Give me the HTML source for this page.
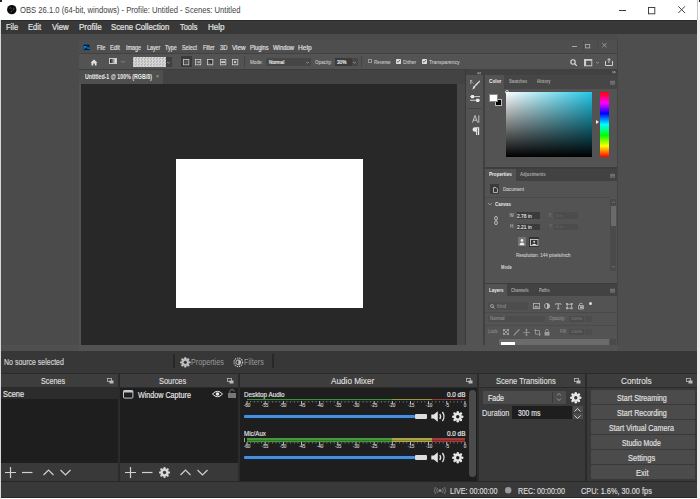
<!DOCTYPE html>
<html><head><meta charset="utf-8">
<style>
*{margin:0;padding:0;box-sizing:border-box}
html,body{width:700px;height:499px;overflow:hidden;background:#fff;font-family:"Liberation Sans",sans-serif;position:relative}
.a{position:absolute}
.t{position:absolute;white-space:nowrap}
svg{overflow:visible}
</style></head><body>
<div class="a" style="left:0px;top:0px;width:700px;height:499px;background:#ffffff;"></div>
<div class="a" style="left:0px;top:20px;width:1px;height:479px;background:#d8d8d8;"></div>
<div class="a" style="left:697px;top:20px;width:3px;height:479px;background:#e8e8e8;"></div>
<div class="a" style="left:0px;top:0px;width:1.5px;height:1.5px;background:#222;"></div>
<div class="a" style="left:698.5px;top:0px;width:1.5px;height:1.5px;background:#222;"></div>
<svg class="a" style="left:6.5px;top:5px;" width="10" height="10" viewBox="0 0 10 10"><circle cx="4.75" cy="4.65" r="4.7" fill="#0a0a0a"/><path d="M2.2 3.2 Q3.6 2.2 4.6 3.6 M6.8 2.8 Q7.4 4.6 5.9 5.4 M3.6 7.2 Q4.9 6.9 4.6 5.6" stroke="#6a6a6a" stroke-width="0.8" fill="none"/></svg>
<div class="t" style="left:19.916773338882933px;top:6.19px;font-size:8.4px;line-height:8.4px;color:#404040;transform:scaleX(0.9124444312311119);transform-origin:0 0;">OBS 26.1.0 (64-bit, windows) - Profile: Untitled - Scenes: Untitled</div>
<div class="a" style="left:619px;top:9.6px;width:7.2px;height:0.9px;background:#3a3a3a;"></div>
<svg class="a" style="left:648px;top:6.5px;" width="8" height="8" viewBox="0 0 8 8"><rect x="0.5" y="0.5" width="6.3" height="6.3" fill="none" stroke="#3a3a3a" stroke-width="0.95"/></svg>
<svg class="a" style="left:678px;top:6.3px;" width="8" height="8" viewBox="0 0 8 8"><path d="M0.3 0.3 L7 7 M7 0.3 L0.3 7" stroke="#3a3a3a" stroke-width="0.95"/></svg>
<div class="a" style="left:697px;top:0px;width:1px;height:20px;background:#c8c8c8;"></div>
<div class="a" style="left:1px;top:20px;width:696px;height:14px;background:#383838;"></div>
<div class="a" style="left:1px;top:20px;width:696px;height:1px;background:#2c2c2c;"></div>
<div class="t" style="left:5.625331224452068px;top:23.02px;font-size:8.6px;line-height:8.6px;color:#e6e6e6;-webkit-text-stroke:0.20px #e6e6e6;transform:scaleX(0.8713227338324011);transform-origin:0 0;">File</div>
<div class="t" style="left:28.220367004075698px;top:23.02px;font-size:8.6px;line-height:8.6px;color:#e6e6e6;-webkit-text-stroke:0.20px #e6e6e6;transform:scaleX(0.8828674323821);transform-origin:0 0;">Edit</div>
<div class="t" style="left:51.61154441443355px;top:23.02px;font-size:8.6px;line-height:8.6px;color:#e6e6e6;-webkit-text-stroke:0.20px #e6e6e6;transform:scaleX(0.9033850827126679);transform-origin:0 0;">View</div>
<div class="t" style="left:78.59919839679358px;top:23.02px;font-size:8.6px;line-height:8.6px;color:#e6e6e6;-webkit-text-stroke:0.20px #e6e6e6;transform:scaleX(0.9320967516428206);transform-origin:0 0;">Profile</div>
<div class="t" style="left:111.11156864563226px;top:23.02px;font-size:8.6px;line-height:8.6px;color:#e6e6e6;-webkit-text-stroke:0.20px #e6e6e6;transform:scaleX(0.9033287310877799);transform-origin:0 0;">Scene Collection</div>
<div class="t" style="left:179.82797691563346px;top:23.02px;font-size:8.6px;line-height:8.6px;color:#e6e6e6;-webkit-text-stroke:0.20px #e6e6e6;transform:scaleX(0.8651699636431112);transform-origin:0 0;">Tools</div>
<div class="t" style="left:207.69576057076574px;top:23.02px;font-size:8.6px;line-height:8.6px;color:#e6e6e6;-webkit-text-stroke:0.20px #e6e6e6;transform:scaleX(0.9400916958936402);transform-origin:0 0;">Help</div>
<div class="a" style="left:1px;top:34px;width:696px;height:317px;background:#4b4b4b;"></div>
<div class="a" style="left:618px;top:34px;width:79px;height:317px;background:#4e4e4e;"></div>
<div class="a" style="left:1px;top:344.5px;width:696px;height:6.5px;background:#4f4f4f;"></div>
<div class="a" style="left:79px;top:40px;width:539px;height:311px;background:#535353;"></div>
<div class="a" style="left:79px;top:40px;width:539px;height:13px;background:#4e4e4e;"></div>
<svg class="a" style="left:83.3px;top:44.3px;" width="7" height="7" viewBox="0 0 7 7"><rect x="0.25" y="0.25" width="6.6" height="6.3" rx="1" fill="#001e36" stroke="#2b6ea8" stroke-width="0.5"/><text x="1.1" y="4.9" font-family="Liberation Sans" font-weight="700" font-size="4.2" fill="#31a8ff">Ps</text></svg>
<div class="t" style="left:96.7403611116817px;top:45.10px;font-size:6.5px;line-height:6.5px;color:#e2e2e2;-webkit-text-stroke:0.15px #e2e2e2;transform:scaleX(0.7988888871332441);transform-origin:0 0;">File</div>
<div class="t" style="left:110.41527525305678px;top:45.10px;font-size:6.5px;line-height:6.5px;color:#e2e2e2;-webkit-text-stroke:0.15px #e2e2e2;transform:scaleX(0.8760761444406989);transform-origin:0 0;">Edit</div>
<div class="t" style="left:125.93041437170281px;top:45.10px;font-size:6.5px;line-height:6.5px;color:#e2e2e2;-webkit-text-stroke:0.15px #e2e2e2;transform:scaleX(0.8294942409144451);transform-origin:0 0;">Image</div>
<div class="t" style="left:146.53460329802056px;top:45.10px;font-size:6.5px;line-height:6.5px;color:#e2e2e2;-webkit-text-stroke:0.15px #e2e2e2;transform:scaleX(0.8166052368598766);transform-origin:0 0;">Layer</div>
<div class="t" style="left:165.3305080794941px;top:45.10px;font-size:6.5px;line-height:6.5px;color:#e2e2e2;-webkit-text-stroke:0.15px #e2e2e2;transform:scaleX(0.829205909248921);transform-origin:0 0;">Type</div>
<div class="t" style="left:182.33227358293243px;top:45.10px;font-size:6.5px;line-height:6.5px;color:#e2e2e2;-webkit-text-stroke:0.15px #e2e2e2;transform:scaleX(0.8237735909771052);transform-origin:0 0;">Select</div>
<div class="t" style="left:202.74204895207387px;top:45.10px;font-size:6.5px;line-height:6.5px;color:#e2e2e2;-webkit-text-stroke:0.15px #e2e2e2;transform:scaleX(0.7936955320804068);transform-origin:0 0;">Filter</div>
<div class="t" style="left:219.7054685548236px;top:45.10px;font-size:6.5px;line-height:6.5px;color:#e2e2e2;-webkit-text-stroke:0.15px #e2e2e2;transform:scaleX(0.906250600542739);transform-origin:0 0;">3D</div>
<div class="t" style="left:231.68437983672726px;top:45.10px;font-size:6.5px;line-height:6.5px;color:#e2e2e2;-webkit-text-stroke:0.15px #e2e2e2;transform:scaleX(0.9711389639161178);transform-origin:0 0;">View</div>
<div class="t" style="left:249.7178517546094px;top:45.10px;font-size:6.5px;line-height:6.5px;color:#e2e2e2;-webkit-text-stroke:0.15px #e2e2e2;transform:scaleX(0.8681484473556892);transform-origin:0 0;">Plugins</div>
<div class="t" style="left:273.20432603463354px;top:45.10px;font-size:6.5px;line-height:6.5px;color:#e2e2e2;-webkit-text-stroke:0.15px #e2e2e2;transform:scaleX(0.9097660472814846);transform-origin:0 0;">Window</div>
<div class="t" style="left:297.6694897748399px;top:45.10px;font-size:6.5px;line-height:6.5px;color:#e2e2e2;-webkit-text-stroke:0.15px #e2e2e2;transform:scaleX(1.016954538954126);transform-origin:0 0;">Help</div>
<div class="a" style="left:568px;top:40.6px;width:47px;height:9px;background:#4f4f4f;"></div>
<div class="a" style="left:583px;top:40.6px;width:0.5px;height:9px;background:#474747;"></div>
<div class="a" style="left:597px;top:40.6px;width:0.5px;height:9px;background:#474747;"></div>
<div class="a" style="left:571.6px;top:46.4px;width:5px;height:1px;background:#a8a8a8;"></div>
<svg class="a" style="left:584.8px;top:44px;" width="6" height="5" viewBox="0 0 6 5"><rect x="0.5" y="0.5" width="4.2" height="3.4" fill="none" stroke="#a8a8a8" stroke-width="0.9"/></svg>
<svg class="a" style="left:602.4px;top:43px;" width="6" height="6" viewBox="0 0 6 6"><path d="M0.3 0.3 L4.5 4.2 M4.5 0.3 L0.3 4.2" stroke="#a8a8a8" stroke-width="0.8"/></svg>
<div class="a" style="left:79px;top:53px;width:539px;height:1px;background:#424242;"></div>
<div class="a" style="left:79px;top:54px;width:539px;height:15px;background:#535353;"></div>
<div class="a" style="left:79px;top:69px;width:539px;height:1px;background:#3d3d3d;"></div>
<div class="a" style="left:79px;top:69.5px;width:386px;height:14px;background:#434343;"></div>
<div class="a" style="left:79px;top:69.5px;width:84px;height:14px;background:#4f4f4f;"></div>
<div class="t" style="left:85.23630502371148px;top:73.51px;font-size:6.6px;line-height:6.6px;color:#ececec;font-weight:700;transform:scaleX(0.7990756857227818);transform-origin:0 0;">Untitled-1 @ 100% (RGB/8)</div>
<div class="t" style="left:156px;top:74.37px;font-size:5px;line-height:5px;color:#999;-webkit-text-stroke:0.10px #999;">×</div>
<div class="a" style="left:81px;top:83.5px;width:375.7px;height:261px;background:#282828;"></div>
<div class="a" style="left:456.7px;top:83.5px;width:8.5px;height:261px;background:#484848;"></div>
<div class="a" style="left:465.2px;top:69px;width:0.8px;height:276px;background:#3a3a3a;"></div>
<div class="a" style="left:176px;top:159px;width:187px;height:148.5px;background:#ffffff;"></div>
<svg class="a" style="left:90px;top:59px;" width="8" height="7" viewBox="0 0 8 7"><path d="M0.5 3.8 L4 0.6 L7.5 3.8 L6.5 3.8 L6.5 6.5 L4.8 6.5 L4.8 4.6 L3.2 4.6 L3.2 6.5 L1.5 6.5 L1.5 3.8 Z" fill="#e0e0e0"/></svg>
<div class="a" style="left:109px;top:58px;width:8px;height:6px;background:linear-gradient(90deg,#1a1a1a,#f0f0f0);border:0.5px solid #ccc"></div>
<svg class="a" style="left:121px;top:61px;" width="4" height="2" viewBox="0 0 4 2"><path d="M0 0 L2 1.5 L4 0" stroke="#999" stroke-width="0.7" fill="none"/></svg>
<div class="a" style="left:132.5px;top:57.2px;width:33.1px;height:9.4px;background:repeating-conic-gradient(#d8d8d8 0% 25%, #b8b8b8 0% 50%) 0 0/3px 3px;"></div>
<div class="a" style="left:165.6px;top:57.2px;width:6px;height:9.4px;background:#3e3e3e;"></div>
<svg class="a" style="left:167px;top:61.5px;" width="3" height="2" viewBox="0 0 3 2"><path d="M0 0 L1.5 1.2 L3 0" stroke="#aaa" stroke-width="0.7" fill="none"/></svg>
<div class="a" style="left:181px;top:56px;width:10.5px;height:11px;background:#3a3a3a;"></div>
<svg class="a" style="left:183.3px;top:58.6px;" width="7" height="7" viewBox="0 0 7 7"><rect x="0.4" y="0.4" width="5.4" height="5.4" fill="none" stroke="#cfcfcf" stroke-width="0.8"/><rect x="1.3" y="1.3" width="3.6" height="3.6" fill="#555"/></svg>
<svg class="a" style="left:195.3px;top:58.6px;" width="7" height="7" viewBox="0 0 7 7"><rect x="0.4" y="0.4" width="5.4" height="5.4" fill="none" stroke="#cfcfcf" stroke-width="0.8"/><path d="M1.6 3.1 L4.6 3.1 M3.4 1.9 L4.6 3.1 L3.4 4.3" stroke="#cfcfcf" stroke-width="0.8" fill="none"/></svg>
<svg class="a" style="left:207.3px;top:58.6px;" width="7" height="7" viewBox="0 0 7 7"><rect x="0.4" y="0.4" width="5.4" height="5.4" fill="none" stroke="#cfcfcf" stroke-width="0.8"/><path d="M1.2 1.2 L5 1.2 L5 5 Z" fill="#2a2a2a"/></svg>
<svg class="a" style="left:219.6px;top:58.6px;" width="7" height="7" viewBox="0 0 7 7"><rect x="0.4" y="0.4" width="5.4" height="5.4" fill="none" stroke="#cfcfcf" stroke-width="0.8"/><rect x="1.2" y="2.2" width="3.8" height="1.8" fill="#cfcfcf"/></svg>
<svg class="a" style="left:231.5px;top:58.6px;" width="7" height="7" viewBox="0 0 7 7"><rect x="0.4" y="0.4" width="5.4" height="5.4" fill="none" stroke="#cfcfcf" stroke-width="0.8"/><circle cx="3.1" cy="3.1" r="1.2" fill="#cfcfcf"/></svg>
<div class="a" style="left:244px;top:56px;width:0.6px;height:11px;background:#444;"></div>
<div class="t" style="left:249.76759859629553px;top:59.60px;font-size:5.2px;line-height:5.2px;color:#c4c4c4;-webkit-text-stroke:0.10px #c4c4c4;transform:scaleX(0.8938515527095321);transform-origin:0 0;">Mode:</div>
<div class="a" style="left:265.8px;top:57.5px;width:45px;height:8.5px;background:#464646;"></div>
<div class="t" style="left:268.7637810984977px;top:59.60px;font-size:5.2px;line-height:5.2px;color:#e6e6e6;-webkit-text-stroke:0.20px #e6e6e6;transform:scaleX(0.9085342365473249);transform-origin:0 0;">Normal</div>
<svg class="a" style="left:306px;top:61.5px;" width="3" height="2" viewBox="0 0 3 2"><path d="M0 0 L1.5 1.2 L3 0" stroke="#aaa" stroke-width="0.7" fill="none"/></svg>
<div class="t" style="left:314.76662736364034px;top:59.60px;font-size:5.2px;line-height:5.2px;color:#c4c4c4;-webkit-text-stroke:0.10px #c4c4c4;transform:scaleX(0.897587062921793);transform-origin:0 0;">Opacity:</div>
<div class="a" style="left:335px;top:57.5px;width:16.5px;height:8.5px;background:#3a3a3a;"></div>
<div class="t" style="left:336.7645789396243px;top:59.60px;font-size:5.2px;line-height:5.2px;color:#e6e6e6;-webkit-text-stroke:0.20px #e6e6e6;transform:scaleX(0.9054656168295876);transform-origin:0 0;">30%</div>
<div class="a" style="left:351.5px;top:57.5px;width:6.5px;height:8.5px;background:#464646;"></div>
<svg class="a" style="left:353.3px;top:61.5px;" width="3" height="2" viewBox="0 0 3 2"><path d="M0 0 L1.5 1.2 L3 0" stroke="#aaa" stroke-width="0.7" fill="none"/></svg>
<div class="a" style="left:361px;top:56px;width:0.6px;height:11px;background:#444;"></div>
<div class="a" style="left:367.5px;top:59px;width:4px;height:4px;background:transparent;border:0.6px solid #999"></div>
<div class="t" style="left:373.5770840320958px;top:59.60px;font-size:5.2px;line-height:5.2px;color:#c4c4c4;-webkit-text-stroke:0.10px #c4c4c4;transform:scaleX(0.8573691073239559);transform-origin:0 0;">Reverse</div>
<div class="a" style="left:396px;top:59px;width:5px;height:5px;background:#e0e0e0;border-radius:0.8px"></div>
<svg class="a" style="left:396px;top:59px;" width="5" height="5" viewBox="0 0 5 5"><path d="M0.8 2.2 L2 3.3 L4 1" stroke="#444" stroke-width="0.8" fill="none"/></svg>
<div class="t" style="left:402.7516973811833px;top:59.60px;font-size:5.2px;line-height:5.2px;color:#c4c4c4;-webkit-text-stroke:0.10px #c4c4c4;transform:scaleX(0.9550100723718579);transform-origin:0 0;">Dither</div>
<div class="a" style="left:422.3px;top:59px;width:5px;height:5px;background:#e0e0e0;border-radius:0.8px"></div>
<svg class="a" style="left:422.3px;top:59px;" width="5" height="5" viewBox="0 0 5 5"><path d="M0.8 2.2 L2 3.3 L4 1" stroke="#444" stroke-width="0.8" fill="none"/></svg>
<div class="t" style="left:428.749444732989px;top:59.60px;font-size:5.2px;line-height:5.2px;color:#c4c4c4;-webkit-text-stroke:0.10px #c4c4c4;transform:scaleX(0.9636741038884852);transform-origin:0 0;">Transparency</div>
<svg class="a" style="left:570px;top:59px;" width="7" height="7" viewBox="0 0 7 7"><circle cx="3" cy="3" r="2.2" fill="none" stroke="#dcdcdc" stroke-width="1.1"/><path d="M4.6 4.6 L6.8 6.8" stroke="#dcdcdc" stroke-width="1.2"/></svg>
<svg class="a" style="left:584px;top:59px;" width="9" height="8" viewBox="0 0 9 8"><rect x="0.5" y="0.5" width="7.3" height="6.3" fill="none" stroke="#d0d0d0" stroke-width="0.9"/><rect x="0.5" y="0.5" width="7.3" height="1.3" fill="#d0d0d0"/><rect x="0.5" y="0.5" width="1.6" height="6.3" fill="#d0d0d0"/></svg>
<svg class="a" style="left:595.5px;top:61.5px;" width="3" height="2" viewBox="0 0 3 2"><path d="M0 0 L1.5 1.2 L3 0" stroke="#aaa" stroke-width="0.7" fill="none"/></svg>
<svg class="a" style="left:604.9px;top:58.3px;" width="8" height="8" viewBox="0 0 8 8"><path d="M0.5 3 L0.5 7.5 L7.5 7.5 L7.5 3 M4 5 L4 0.7 M2.3 2.3 L4 0.6 L5.7 2.3" stroke="#ddd" stroke-width="0.9" fill="none"/></svg>
<div class="a" style="left:466px;top:75.4px;width:17px;height:269.6px;background:#535353;"></div>
<div class="a" style="left:483px;top:75.4px;width:2.2px;height:269.6px;background:#404040;"></div>
<div class="a" style="left:468px;top:108px;width:14px;height:0.6px;background:#454545;"></div>
<svg class="a" style="left:469.5px;top:79.5px;" width="11" height="10" viewBox="0 0 11 10"><path d="M0.8 0.5 L0.8 4 M0 0.8 L2.2 0.8 M2.5 2.5 L3.3 3.3" stroke="#d8d8d8" stroke-width="0.8" fill="none"/><path d="M9.6 0.6 L10.2 1.2 L5.8 6.2 L4.6 5.2 Z" fill="#e6e6e6"/><path d="M4.3 5.6 L5.5 6.6 Q5 9 2.2 9.6 Q3 8.2 3.2 7 Q3.5 5.9 4.3 5.6 Z" fill="#e6e6e6"/></svg>
<svg class="a" style="left:470.3px;top:94.8px;" width="10" height="8" viewBox="0 0 10 8"><path d="M0 1.6 L10 1.6 M0 5.3 L10 5.3" stroke="#cfcfcf" stroke-width="1"/><rect x="1" y="0" width="3" height="3.2" rx="0.6" fill="#ececec"/><rect x="6.2" y="3.7" width="3" height="3.4" rx="0.6" fill="#ececec"/></svg>
<svg class="a" style="left:471.5px;top:115px;" width="8" height="8" viewBox="0 0 8 8"><path d="M0.5 7.5 L3 0.5 L5.5 7.5 M1.4 5.2 L4.6 5.2 M6.8 0.3 L6.8 7.8" stroke="#dcdcdc" stroke-width="0.8" fill="none"/></svg>
<svg class="a" style="left:471.5px;top:127px;" width="8" height="9" viewBox="0 0 8 9"><path d="M3 0.3 L7.2 0.3 L7.2 8 L6 8 L6 1.3 L5.3 1.3 L5.3 8 L4.1 8 L4.1 4.8 L3 4.8 Q0.5 4.8 0.5 2.5 Q0.5 0.3 3 0.3 Z" fill="#e6e6e6"/></svg>
<div class="a" style="left:466px;top:69px;width:152px;height:6.4px;background:#414141;"></div>
<svg class="a" style="left:477.2px;top:71.6px;" width="4" height="3" viewBox="0 0 4 3"><path d="M2 0.3 L0.5 1.2 L2 2.1 M3.8 0.3 L2.3 1.2 L3.8 2.1" stroke="#c8c8c8" stroke-width="0.6" fill="none"/></svg>
<svg class="a" style="left:611.5px;top:71.4px;" width="4" height="3" viewBox="0 0 4 3"><path d="M0.3 0.3 L1.8 1.2 L0.3 2.1 M2.1 0.3 L3.6 1.2 L2.1 2.1" stroke="#c8c8c8" stroke-width="0.6" fill="none"/></svg>
<div class="a" style="left:485px;top:76px;width:133px;height:91px;background:#535353;"></div>
<div class="a" style="left:485px;top:75.2px;width:133px;height:13.4px;background:#464646;"></div>
<div class="a" style="left:485px;top:75.4px;width:19.3px;height:13.2px;background:#535353;"></div>
<div class="t" style="left:489px;top:80.15px;font-size:4.9px;line-height:4.9px;color:#efefef;font-weight:700;transform:scaleX(0.97);transform-origin:0 0;">Color</div>
<div class="t" style="left:508.5px;top:80.24px;font-size:4.8px;line-height:4.8px;color:#a8a8a8;font-weight:700;transform:scaleX(0.82);transform-origin:0 0;">Swatches</div>
<div class="t" style="left:536.6px;top:80.24px;font-size:4.8px;line-height:4.8px;color:#a8a8a8;font-weight:700;transform:scaleX(0.82);transform-origin:0 0;">History</div>
<svg class="a" style="left:609.7px;top:80.9px;" width="5" height="3" viewBox="0 0 5 3"><path d="M0 0.3 L5 0.3 M0 1.7 L5 1.7 M0 3.1 L5 3.1" stroke="#a8a8a8" stroke-width="0.55"/></svg>
<div class="a" style="left:494.8px;top:98.7px;width:7.7px;height:7.7px;background:#000;border:0.6px solid #bbb"></div>
<div class="a" style="left:489.3px;top:93.9px;width:8.4px;height:8.1px;background:#fff;border:0.5px solid #888"></div>
<div class="a" style="left:505.6px;top:92px;width:86.6px;height:65px;background:linear-gradient(to bottom, rgba(0,0,0,0), #000), linear-gradient(to right, #fff, #22c8e8);"></div>
<svg class="a" style="left:504.5px;top:90px;" width="4" height="4" viewBox="0 0 4 4"><circle cx="2" cy="2" r="1.5" fill="none" stroke="#fff" stroke-width="0.7"/></svg>
<div class="a" style="left:599.8px;top:91.5px;width:9.7px;height:65.8px;background:linear-gradient(to bottom,#ff0000 0%,#ff00ff 17%,#0000ff 33%,#00ffff 50%,#00ff00 67%,#ffff00 83%,#ff0000 100%);"></div>
<svg class="a" style="left:596px;top:119.7px;" width="3" height="4" viewBox="0 0 3 4"><path d="M0 0 L3 2 L0 4 Z" fill="#f0f0f0"/></svg>
<div class="a" style="left:485px;top:167px;width:133px;height:1.5px;background:#3e3e3e;"></div>
<div class="a" style="left:485px;top:168.5px;width:133px;height:114px;background:#535353;"></div>
<div class="a" style="left:485px;top:168.5px;width:133px;height:12.5px;background:#424242;"></div>
<div class="a" style="left:485px;top:168.5px;width:30.6px;height:12.5px;background:#535353;"></div>
<div class="t" style="left:489px;top:173.05px;font-size:4.9px;line-height:4.9px;color:#efefef;font-weight:700;transform:scaleX(0.94);transform-origin:0 0;">Properties</div>
<div class="t" style="left:519.6px;top:173.05px;font-size:4.9px;line-height:4.9px;color:#a8a8a8;font-weight:700;transform:scaleX(0.86);transform-origin:0 0;">Adjustments</div>
<svg class="a" style="left:610px;top:173.5px;" width="5" height="3" viewBox="0 0 5 3"><path d="M0 0.3 L5 0.3 M0 1.7 L5 1.7 M0 3.1 L5 3.1" stroke="#a8a8a8" stroke-width="0.55"/></svg>
<div class="a" style="left:490.4px;top:184.4px;width:9px;height:10px;background:#3a3a3a;"></div>
<svg class="a" style="left:492.5px;top:186.5px;" width="5" height="6" viewBox="0 0 5 6"><path d="M0.5 0.5 L3 0.5 L4.5 2 L4.5 5.5 L0.5 5.5 Z" fill="none" stroke="#ddd" stroke-width="0.7"/></svg>
<div class="t" style="left:503px;top:187.91px;font-size:4.6px;line-height:4.6px;color:#cfcfcf;-webkit-text-stroke:0.09px #cfcfcf;">Document</div>
<div class="a" style="left:485px;top:196.5px;width:125px;height:0.8px;background:#4a4a4a;"></div>
<svg class="a" style="left:488px;top:202.5px;" width="4" height="2" viewBox="0 0 4 2"><path d="M0 0 L2 2 L4 0" stroke="#aaa" stroke-width="0.7" fill="none"/></svg>
<div class="t" style="left:495px;top:201.77px;font-size:5px;line-height:5px;color:#e6e6e6;font-weight:700;transform:scaleX(0.9);transform-origin:0 0;">Canvas</div>
<div class="t" style="left:509.6px;top:213.61px;font-size:4.6px;line-height:4.6px;color:#b8b8b8;-webkit-text-stroke:0.09px #b8b8b8;">W</div>
<div class="a" style="left:516.6px;top:212px;width:23.4px;height:6.5px;background:#3b3b3b;"></div>
<div class="t" style="left:517.354502486628px;top:213.60px;font-size:5.2px;line-height:5.2px;color:#e6e6e6;-webkit-text-stroke:0.10px #e6e6e6;transform:scaleX(0.9442212052769059);transform-origin:0 0;">2.78 in</div>
<div class="t" style="left:548.6px;top:213.61px;font-size:4.6px;line-height:4.6px;color:#777;-webkit-text-stroke:0.09px #777;">X</div>
<div class="a" style="left:554.4px;top:212px;width:23.4px;height:6.5px;background:#4c4c4c;"></div>
<div class="t" style="left:556px;top:213.66px;font-size:4.3px;line-height:4.3px;color:#666;-webkit-text-stroke:0.09px #666;">0 in</div>
<div class="t" style="left:510px;top:225.11px;font-size:4.6px;line-height:4.6px;color:#b8b8b8;-webkit-text-stroke:0.09px #b8b8b8;">H</div>
<div class="a" style="left:516.6px;top:223.6px;width:23.4px;height:6.5px;background:#3b3b3b;"></div>
<div class="t" style="left:517.354502486628px;top:225.10px;font-size:5.2px;line-height:5.2px;color:#e6e6e6;-webkit-text-stroke:0.10px #e6e6e6;transform:scaleX(0.9442212052769059);transform-origin:0 0;">2.21 in</div>
<div class="t" style="left:549px;top:225.11px;font-size:4.6px;line-height:4.6px;color:#777;-webkit-text-stroke:0.09px #777;">Y</div>
<div class="a" style="left:554.4px;top:223.6px;width:23.4px;height:6.5px;background:#4c4c4c;"></div>
<div class="t" style="left:556px;top:225.36px;font-size:4.3px;line-height:4.3px;color:#666;-webkit-text-stroke:0.09px #666;">0 in</div>
<svg class="a" style="left:493.5px;top:216px;" width="4" height="9" viewBox="0 0 4 9"><rect x="0.7" y="0.5" width="2.6" height="3.5" rx="1.2" fill="none" stroke="#ddd" stroke-width="0.8"/><rect x="0.7" y="5" width="2.6" height="3.5" rx="1.2" fill="none" stroke="#ddd" stroke-width="0.8"/></svg>
<div class="a" style="left:517.6px;top:237.4px;width:8.4px;height:9px;background:#747474;"></div>
<svg class="a" style="left:518.8px;top:238.4px;" width="6" height="8" viewBox="0 0 6 8"><circle cx="3" cy="2.4" r="1.4" fill="#f0f0f0"/><path d="M0.6 7.2 Q0.6 4.4 3 4.4 Q5.4 4.4 5.4 7.2 Z" fill="#f0f0f0"/></svg>
<div class="a" style="left:529px;top:237px;width:10px;height:9.8px;background:#333;"></div>
<svg class="a" style="left:530px;top:238.5px;" width="9" height="7" viewBox="0 0 9 7"><rect x="0.5" y="0.5" width="7.5" height="6" fill="none" stroke="#ddd" stroke-width="0.8"/><circle cx="4.2" cy="2.8" r="1" fill="#ddd"/><path d="M1.8 6 Q4.2 3.5 6.6 6 Z" fill="#ddd"/></svg>
<div class="t" style="left:515.9px;top:254.11px;font-size:4.6px;line-height:4.6px;color:#cfcfcf;-webkit-text-stroke:0.09px #cfcfcf;">Resolution: 144 pixels/inch</div>
<div class="t" style="left:501.3px;top:265.54px;font-size:4.8px;line-height:4.8px;color:#d8d8d8;font-weight:700;transform:scaleX(0.85);transform-origin:0 0;">Mode</div>
<div class="a" style="left:610px;top:199px;width:6px;height:72px;background:#4a4a4a;"></div>
<div class="a" style="left:610.5px;top:205.5px;width:5px;height:20px;background:#6a6a6a;"></div>
<svg class="a" style="left:611.5px;top:201px;" width="3" height="2" viewBox="0 0 3 2"><path d="M0 2 L1.5 0.5 L3 2" stroke="#888" stroke-width="0.6" fill="none"/></svg>
<svg class="a" style="left:611.5px;top:266px;" width="3" height="2" viewBox="0 0 3 2"><path d="M0 0 L1.5 1.5 L3 0" stroke="#888" stroke-width="0.6" fill="none"/></svg>
<div class="a" style="left:485px;top:282.5px;width:133px;height:1.5px;background:#3e3e3e;"></div>
<div class="a" style="left:485px;top:284px;width:133px;height:61px;background:#535353;"></div>
<div class="a" style="left:485px;top:284px;width:133px;height:12.4px;background:#424242;"></div>
<div class="a" style="left:485px;top:284px;width:22px;height:12.4px;background:#535353;"></div>
<div class="t" style="left:489px;top:288.65px;font-size:4.9px;line-height:4.9px;color:#efefef;font-weight:700;transform:scaleX(0.92);transform-origin:0 0;">Layers</div>
<div class="t" style="left:510.7px;top:288.74px;font-size:4.8px;line-height:4.8px;color:#a8a8a8;font-weight:700;transform:scaleX(0.82);transform-origin:0 0;">Channels</div>
<div class="t" style="left:538.8px;top:288.74px;font-size:4.8px;line-height:4.8px;color:#a8a8a8;font-weight:700;transform:scaleX(0.82);transform-origin:0 0;">Paths</div>
<svg class="a" style="left:609.8px;top:289px;" width="5" height="3" viewBox="0 0 5 3"><path d="M0 0.3 L5 0.3 M0 1.7 L5 1.7 M0 3.1 L5 3.1" stroke="#a8a8a8" stroke-width="0.55"/></svg>
<div class="a" style="left:488px;top:302px;width:40px;height:8.2px;background:#4d4d4d;"></div>
<svg class="a" style="left:489.5px;top:303.5px;" width="5" height="5" viewBox="0 0 5 5"><circle cx="2" cy="2" r="1.5" fill="none" stroke="#bbb" stroke-width="0.7"/><path d="M3 3 L4.5 4.5" stroke="#bbb" stroke-width="0.8"/></svg>
<div class="t" style="left:497px;top:305.39px;font-size:4.5px;line-height:4.5px;color:#8a8a8a;-webkit-text-stroke:0.09px #8a8a8a;">Kind</div>
<svg class="a" style="left:533px;top:303.2px;" width="7" height="6" viewBox="0 0 7 6"><rect x="0.4" y="0.4" width="6.2" height="5.2" fill="none" stroke="#b8b8b8" stroke-width="0.8"/><path d="M1.2 4.6 L2.8 2.6 L4 3.8 L4.8 3 L5.8 4.6 Z" fill="#b8b8b8"/></svg>
<svg class="a" style="left:543.7px;top:303.2px;" width="6" height="6" viewBox="0 0 6 6"><circle cx="3" cy="3" r="2.6" fill="none" stroke="#b8b8b8" stroke-width="0.8"/><path d="M3 0.4 A2.6 2.6 0 0 1 3 5.6 Z" fill="#b8b8b8"/></svg>
<svg class="a" style="left:554.8px;top:303.2px;" width="7" height="6" viewBox="0 0 7 6"><path d="M0.5 0.8 L6 0.8 M3.25 0.8 L3.25 5.8 M2 5.8 L4.5 5.8 M0.5 0.8 L0.5 1.8 M6 0.8 L6 1.8" stroke="#b8b8b8" stroke-width="0.9" fill="none"/></svg>
<svg class="a" style="left:566px;top:303px;" width="7" height="7" viewBox="0 0 7 7"><rect x="1.2" y="1.2" width="4.2" height="4" fill="none" stroke="#b8b8b8" stroke-width="0.8"/><rect x="0" y="0" width="1.8" height="1.8" fill="#b8b8b8"/><rect x="4.8" y="0" width="1.8" height="1.8" fill="#b8b8b8"/><rect x="0" y="4.4" width="1.8" height="1.8" fill="#b8b8b8"/><rect x="4.8" y="4.4" width="1.8" height="1.8" fill="#b8b8b8"/></svg>
<svg class="a" style="left:577.5px;top:303px;" width="7" height="7" viewBox="0 0 7 7"><path d="M0.5 2.5 L0.5 6 L5.5 6 L5.5 2.5 Z M1.5 2.5 L1.5 1.2 Q1.5 0.3 3 0.3 Q4.5 0.3 4.5 1.2" fill="none" stroke="#b8b8b8" stroke-width="0.8"/><rect x="2" y="3.3" width="3" height="2" fill="#b8b8b8"/></svg>
<svg class="a" style="left:589px;top:302px;" width="3" height="3" viewBox="0 0 3 3"><circle cx="1.5" cy="1.5" r="1.5" fill="#ddd"/></svg>
<div class="a" style="left:485px;top:312px;width:133px;height:0.7px;background:#4a4a4a;"></div>
<div class="a" style="left:488px;top:315.6px;width:57px;height:6.8px;background:#4d4d4d;"></div>
<div class="t" style="left:490px;top:317.19px;font-size:4.5px;line-height:4.5px;color:#8f8f8f;-webkit-text-stroke:0.09px #8f8f8f;">Normal</div>
<div class="t" style="left:549px;top:317.19px;font-size:4.5px;line-height:4.5px;color:#8a8a8a;-webkit-text-stroke:0.09px #8a8a8a;">Opacity:</div>
<div class="a" style="left:569px;top:315.6px;width:15.4px;height:6.8px;background:#4b4b4b;"></div>
<div class="t" style="left:571px;top:317.36px;font-size:4.3px;line-height:4.3px;color:#777;-webkit-text-stroke:0.09px #777;">100%</div>
<div class="a" style="left:585px;top:315.6px;width:7px;height:6.8px;background:#4d4d4d;"></div>
<div class="a" style="left:485px;top:325px;width:133px;height:0.7px;background:#4a4a4a;"></div>
<div class="t" style="left:488px;top:330.19px;font-size:4.5px;line-height:4.5px;color:#8a8a8a;-webkit-text-stroke:0.09px #8a8a8a;">Lock:</div>
<svg class="a" style="left:502.9px;top:329.2px;" width="6" height="6" viewBox="0 0 6 6"><rect x="0" y="0" width="2" height="2" fill="#9c9c9c"/><rect x="4" y="0" width="2" height="2" fill="#9c9c9c"/><rect x="2" y="2" width="2" height="2" fill="#9c9c9c"/><rect x="0" y="4" width="2" height="2" fill="#9c9c9c"/><rect x="4" y="4" width="2" height="2" fill="#9c9c9c"/><rect x="0.3" y="0.3" width="5.4" height="5.4" fill="none" stroke="#9c9c9c" stroke-width="0.5"/></svg>
<svg class="a" style="left:513.3px;top:328.8px;" width="7" height="7" viewBox="0 0 7 7"><path d="M6.5 0.3 L2.8 4.2" stroke="#9c9c9c" stroke-width="1.1"/><path d="M2.6 4 Q0.8 4.6 0.4 6.8 Q2.6 6.4 3.1 4.6 Z" fill="#9c9c9c"/></svg>
<svg class="a" style="left:523.2px;top:328.8px;" width="7" height="7" viewBox="0 0 7 7"><path d="M3.5 0.2 L3.5 6.8 M0.2 3.5 L6.8 3.5 M2.3 1.3 L3.5 0.2 L4.7 1.3 M2.3 5.7 L3.5 6.8 L4.7 5.7" stroke="#9c9c9c" stroke-width="0.8" fill="none"/></svg>
<svg class="a" style="left:533.5px;top:328.5px;" width="7" height="7" viewBox="0 0 7 7"><path d="M1.5 0 L1.5 5.2 L7 5.2 M0 1.5 L5.5 1.5 L5.5 7" stroke="#9c9c9c" stroke-width="0.8" fill="none"/></svg>
<svg class="a" style="left:544.2px;top:328.8px;" width="6" height="7" viewBox="0 0 6 7"><path d="M1.6 3 L1.6 1.8 Q1.6 0.3 3 0.3 Q4.4 0.3 4.4 1.8 L4.4 3" fill="none" stroke="#9c9c9c" stroke-width="0.8"/><rect x="0.5" y="3" width="5" height="3.6" fill="#9c9c9c"/></svg>
<div class="t" style="left:560px;top:330.19px;font-size:4.5px;line-height:4.5px;color:#8a8a8a;-webkit-text-stroke:0.09px #8a8a8a;">Fill:</div>
<div class="a" style="left:569px;top:328.6px;width:15.4px;height:6.8px;background:#4b4b4b;"></div>
<div class="t" style="left:571px;top:330.36px;font-size:4.3px;line-height:4.3px;color:#777;-webkit-text-stroke:0.09px #777;">100%</div>
<div class="a" style="left:585px;top:328.6px;width:7px;height:6.8px;background:#4d4d4d;"></div>
<div class="a" style="left:499px;top:339px;width:110px;height:6px;background:#6b6b6b;"></div>
<div class="a" style="left:501px;top:341.6px;width:14px;height:3.4px;background:#ffffff;"></div>
<div class="a" style="left:610px;top:339px;width:6px;height:6px;background:#4a4a4a;"></div>
<div class="a" style="left:616.8px;top:40px;width:1.4px;height:305px;background:#444444;"></div>
<div class="a" style="left:1px;top:351px;width:696px;height:22px;background:#373737;"></div>
<div class="t" style="left:3.849944842700236px;top:358.02px;font-size:8.6px;line-height:8.6px;color:#d6d6d6;-webkit-text-stroke:0.17px #d6d6d6;transform:scaleX(0.8140817611622424);transform-origin:0 0;">No source selected</div>
<div class="a" style="left:172.5px;top:354.4px;width:2px;height:14px;background:#282828;"></div>
<div class="a" style="left:271.6px;top:354.4px;width:2px;height:14px;background:#282828;"></div>
<div class="t" style="left:191.3407512328192px;top:357.82px;font-size:8.6px;line-height:8.6px;color:#9a9a9a;transform:scaleX(0.835462249257625);transform-origin:0 0;">Properties</div>
<div class="t" style="left:244.33528434049626px;top:357.82px;font-size:8.6px;line-height:8.6px;color:#9a9a9a;transform:scaleX(0.8481759523342781);transform-origin:0 0;">Filters</div>
<div class="a" style="left:1px;top:373px;width:696px;height:108px;background:#2b2b2b;"></div>
<div class="a" style="left:1px;top:373.8px;width:117px;height:13.2px;background:#3d3d3d;"></div>
<div class="t" style="left:41.03641615714217px;top:376.92px;font-size:8.6px;line-height:8.6px;color:#dedede;-webkit-text-stroke:0.17px #dedede;transform:scaleX(0.8455438205996062);transform-origin:0 0;">Scenes</div>
<svg class="a" style="left:107px;top:378px;" width="7" height="6" viewBox="0 0 7 6"><rect x="0.5" y="0.5" width="4" height="3" fill="none" stroke="#bbb" stroke-width="0.8"/><rect x="2.5" y="2.5" width="4" height="3" fill="#bbb"/></svg>
<div class="a" style="left:120px;top:373.8px;width:118px;height:13.2px;background:#3d3d3d;"></div>
<div class="t" style="left:159.12973151168222px;top:376.92px;font-size:8.6px;line-height:8.6px;color:#dedede;-webkit-text-stroke:0.17px #dedede;transform:scaleX(0.8610895077157378);transform-origin:0 0;">Sources</div>
<svg class="a" style="left:227px;top:378px;" width="7" height="6" viewBox="0 0 7 6"><rect x="0.5" y="0.5" width="4" height="3" fill="none" stroke="#bbb" stroke-width="0.8"/><rect x="2.5" y="2.5" width="4" height="3" fill="#bbb"/></svg>
<div class="a" style="left:240px;top:373.8px;width:237px;height:13.2px;background:#3d3d3d;"></div>
<div class="t" style="left:330.6905452071209px;top:376.92px;font-size:8.6px;line-height:8.6px;color:#dedede;-webkit-text-stroke:0.17px #dedede;transform:scaleX(0.9522204485560454);transform-origin:0 0;">Audio Mixer</div>
<svg class="a" style="left:466px;top:378px;" width="7" height="6" viewBox="0 0 7 6"><rect x="0.5" y="0.5" width="4" height="3" fill="none" stroke="#bbb" stroke-width="0.8"/><rect x="2.5" y="2.5" width="4" height="3" fill="#bbb"/></svg>
<div class="a" style="left:479px;top:373.8px;width:106px;height:13.2px;background:#3d3d3d;"></div>
<div class="t" style="left:496.42462372902924px;top:376.92px;font-size:8.6px;line-height:8.6px;color:#dedede;-webkit-text-stroke:0.17px #dedede;transform:scaleX(0.8729680720250437);transform-origin:0 0;">Scene Transitions</div>
<svg class="a" style="left:574px;top:378px;" width="7" height="6" viewBox="0 0 7 6"><rect x="0.5" y="0.5" width="4" height="3" fill="none" stroke="#bbb" stroke-width="0.8"/><rect x="2.5" y="2.5" width="4" height="3" fill="#bbb"/></svg>
<div class="a" style="left:587px;top:373.8px;width:110px;height:13.2px;background:#3d3d3d;"></div>
<div class="t" style="left:620.5871926520292px;top:376.92px;font-size:8.6px;line-height:8.6px;color:#dedede;-webkit-text-stroke:0.17px #dedede;transform:scaleX(0.9600170883041719);transform-origin:0 0;">Controls</div>
<svg class="a" style="left:686px;top:378px;" width="7" height="6" viewBox="0 0 7 6"><rect x="0.5" y="0.5" width="4" height="3" fill="none" stroke="#bbb" stroke-width="0.8"/><rect x="2.5" y="2.5" width="4" height="3" fill="#bbb"/></svg>
<div class="a" style="left:1px;top:387.5px;width:117px;height:76px;background:#1f1e1f;"></div>
<div class="a" style="left:1px;top:387.5px;width:117px;height:11.5px;background:#2d2c2d;"></div>
<div class="t" style="left:3.028478743383985px;top:390.12px;font-size:8.6px;line-height:8.6px;color:#e6e6e6;-webkit-text-stroke:0.17px #e6e6e6;transform:scaleX(0.8640029223628257);transform-origin:0 0;">Scene</div>
<div class="a" style="left:1px;top:463px;width:117px;height:18px;background:#3a393a;"></div>
<div class="a" style="left:120px;top:387.5px;width:118px;height:76px;background:#1f1e1f;"></div>
<div class="t" style="left:138.3418850677029px;top:390.82px;font-size:8.6px;line-height:8.6px;color:#e6e6e6;-webkit-text-stroke:0.17px #e6e6e6;transform:scaleX(0.8328254239467567);transform-origin:0 0;">Window Capture</div>
<div class="a" style="left:120px;top:463px;width:118px;height:18px;background:#3a393a;"></div>
<div class="a" style="left:240px;top:387.5px;width:237px;height:93.5px;background:#1f1e1f;"></div>
<div class="a" style="left:479px;top:387.5px;width:106px;height:93.5px;background:#3a393a;"></div>
<div class="a" style="left:587px;top:387.5px;width:110px;height:93.5px;background:#3a393a;"></div>
<div class="a" style="left:590.5px;top:390px;width:104px;height:13.5px;background:#4c4b4c;border-radius:1px"></div>
<div class="t" style="left:616.6412588751059px;top:393.72px;font-size:8.6px;line-height:8.6px;color:#e0e0e0;-webkit-text-stroke:0.17px #e0e0e0;transform:scaleX(0.8342816858001069);transform-origin:0 0;">Start Streaming</div>
<div class="a" style="left:590.5px;top:405px;width:104px;height:13.5px;background:#4c4b4c;border-radius:1px"></div>
<div class="t" style="left:616.6412842134523px;top:408.72px;font-size:8.6px;line-height:8.6px;color:#e0e0e0;-webkit-text-stroke:0.17px #e0e0e0;transform:scaleX(0.834222759413262);transform-origin:0 0;">Start Recording</div>
<div class="a" style="left:590.5px;top:420px;width:104px;height:13.5px;background:#4c4b4c;border-radius:1px"></div>
<div class="t" style="left:609.2408059521191px;top:423.72px;font-size:8.6px;line-height:8.6px;color:#e0e0e0;-webkit-text-stroke:0.17px #e0e0e0;transform:scaleX(0.835334995071864);transform-origin:0 0;">Start Virtual Camera</div>
<div class="a" style="left:590.5px;top:435px;width:104px;height:13.5px;background:#4c4b4c;border-radius:1px"></div>
<div class="t" style="left:622.1542849547211px;top:438.72px;font-size:8.6px;line-height:8.6px;color:#e0e0e0;-webkit-text-stroke:0.17px #e0e0e0;transform:scaleX(0.8039884773928894);transform-origin:0 0;">Studio Mode</div>
<div class="a" style="left:590.5px;top:450px;width:104px;height:13.5px;background:#4c4b4c;border-radius:1px"></div>
<div class="t" style="left:628.1239317755476px;top:453.72px;font-size:8.6px;line-height:8.6px;color:#e0e0e0;-webkit-text-stroke:0.17px #e0e0e0;transform:scaleX(0.8745772661684121);transform-origin:0 0;">Settings</div>
<div class="a" style="left:590.5px;top:465px;width:104px;height:13.5px;background:#4c4b4c;border-radius:1px"></div>
<div class="t" style="left:635.6258719086874px;top:468.72px;font-size:8.6px;line-height:8.6px;color:#e0e0e0;-webkit-text-stroke:0.17px #e0e0e0;transform:scaleX(0.8700653286339941);transform-origin:0 0;">Exit</div>
<svg class="a" style="left:5px;top:466.5px;" width="11" height="11" viewBox="0 0 11 11"><path d="M5.5 0 L5.5 11 M0 5.5 L11 5.5" stroke="#d0d0d0" stroke-width="1.2"/></svg>
<svg class="a" style="left:22px;top:466.5px;" width="11" height="11" viewBox="0 0 11 11"><path d="M0 5.5 L10.5 5.5" stroke="#d0d0d0" stroke-width="1.2"/></svg>
<svg class="a" style="left:43px;top:468.5px;" width="11" height="7" viewBox="0 0 11 7"><path d="M0.5 6 L5.5 1 L10.5 6" stroke="#d0d0d0" stroke-width="1.2" fill="none"/></svg>
<svg class="a" style="left:60px;top:468.5px;" width="11" height="7" viewBox="0 0 11 7"><path d="M0.5 1 L5.5 6 L10.5 1" stroke="#d0d0d0" stroke-width="1.2" fill="none"/></svg>
<svg class="a" style="left:125px;top:466.5px;" width="11" height="11" viewBox="0 0 11 11"><path d="M5.5 0 L5.5 11 M0 5.5 L11 5.5" stroke="#d0d0d0" stroke-width="1.2"/></svg>
<svg class="a" style="left:142px;top:466.5px;" width="11" height="11" viewBox="0 0 11 11"><path d="M0 5.5 L10.5 5.5" stroke="#d0d0d0" stroke-width="1.2"/></svg>
<svg class="a" style="left:159px;top:466.5px;" width="11" height="11" viewBox="0 0 11 11"><circle cx="9.79" cy="5.50" r="1.21" fill="#d8d8d8"/><circle cx="8.53" cy="8.53" r="1.21" fill="#d8d8d8"/><circle cx="5.50" cy="9.79" r="1.21" fill="#d8d8d8"/><circle cx="2.47" cy="8.53" r="1.21" fill="#d8d8d8"/><circle cx="1.21" cy="5.50" r="1.21" fill="#d8d8d8"/><circle cx="2.47" cy="2.47" r="1.21" fill="#d8d8d8"/><circle cx="5.50" cy="1.21" r="1.21" fill="#d8d8d8"/><circle cx="8.53" cy="2.47" r="1.21" fill="#d8d8d8"/><circle cx="5.5" cy="5.5" r="3.85" fill="#d8d8d8"/><circle cx="5.5" cy="5.5" r="1.65" fill="#3a393a"/></svg>
<svg class="a" style="left:180px;top:468.5px;" width="11" height="7" viewBox="0 0 11 7"><path d="M0.5 6 L5.5 1 L10.5 6" stroke="#d0d0d0" stroke-width="1.2" fill="none"/></svg>
<svg class="a" style="left:197px;top:468.5px;" width="11" height="7" viewBox="0 0 11 7"><path d="M0.5 1 L5.5 6 L10.5 1" stroke="#d0d0d0" stroke-width="1.2" fill="none"/></svg>
<svg class="a" style="left:123.2px;top:390px;" width="11" height="9" viewBox="0 0 11 9"><rect x="0.5" y="0.5" width="9.4" height="7.6" rx="1" fill="none" stroke="#c8c8c8" stroke-width="1"/><rect x="0.5" y="0.5" width="9.4" height="2" fill="#c8c8c8"/></svg>
<svg class="a" style="left:211.5px;top:389.5px;" width="11" height="8" viewBox="0 0 11 8"><path d="M0.5 4 Q5.5 -1.5 10.5 4 Q5.5 9.5 0.5 4 Z" fill="none" stroke="#e6e6e6" stroke-width="1"/><circle cx="5.5" cy="4" r="1.8" fill="#e6e6e6"/></svg>
<svg class="a" style="left:228px;top:389px;" width="8" height="9" viewBox="0 0 8 9"><path d="M1.8 4 L1.8 2.5 Q1.8 0.5 4 0.5 Q6.2 0.5 6.2 2.5" fill="none" stroke="#777" stroke-width="1"/><rect x="0" y="4" width="8" height="5" fill="#777"/></svg>
<svg class="a" style="left:180.2px;top:356.5px;" width="10.6" height="10.6" viewBox="0 0 10.6 10.6"><circle cx="9.43" cy="5.30" r="1.17" fill="#bdbdbd"/><circle cx="8.22" cy="8.22" r="1.17" fill="#bdbdbd"/><circle cx="5.30" cy="9.43" r="1.17" fill="#bdbdbd"/><circle cx="2.38" cy="8.22" r="1.17" fill="#bdbdbd"/><circle cx="1.17" cy="5.30" r="1.17" fill="#bdbdbd"/><circle cx="2.38" cy="2.38" r="1.17" fill="#bdbdbd"/><circle cx="5.30" cy="1.17" r="1.17" fill="#bdbdbd"/><circle cx="8.22" cy="2.38" r="1.17" fill="#bdbdbd"/><circle cx="5.3" cy="5.3" r="3.71" fill="#bdbdbd"/><circle cx="5.3" cy="5.3" r="1.59" fill="#373737"/></svg>
<svg class="a" style="left:233px;top:356.5px;" width="11" height="11" viewBox="0 0 11 11"><circle cx="5.3" cy="5.3" r="4.3" fill="none" stroke="#bdbdbd" stroke-width="1.2" stroke-dasharray="1.4 0.9"/><circle cx="5.3" cy="5.3" r="2.4" fill="none" stroke="#bdbdbd" stroke-width="1"/><path d="M5.3 2.9 A2.4 2.4 0 0 1 5.3 7.7 Z" fill="#bdbdbd"/></svg>
<div class="t" style="left:243.6854735466052px;top:391.07px;font-size:7px;line-height:7px;color:#e8e8e8;-webkit-text-stroke:0.14px #e8e8e8;transform:scaleX(0.8986470096994201);transform-origin:0 0;">Desktop Audio</div>
<div class="t" style="left:446.5822705163104px;top:391.07px;font-size:7px;line-height:7px;color:#ececec;-webkit-text-stroke:0.20px #ececec;transform:scaleX(0.9077985248273978);transform-origin:0 0;">0.0 dB</div>
<div class="a" style="left:247.1px;top:398.9px;width:145.26666666666668px;height:1.6px;background:#3f8f3c;"></div>
<div class="a" style="left:392.3666666666667px;top:398.9px;width:39.94833333333332px;height:1.6px;background:#9c9640;"></div>
<div class="a" style="left:432.315px;top:398.9px;width:33.185px;height:1.6px;background:#933b3b;"></div>
<div class="a" style="left:247.1px;top:400.5px;width:145.26666666666668px;height:1.0px;background:#1e361e;"></div>
<svg class="a" style="left:247.1px;top:400.5px;" width="222" height="3" viewBox="0 0 222 3"><rect x="-0.40" y="0" width="0.9" height="2.8" fill="#cfcfcf"/><rect x="3.23" y="0" width="0.8" height="1.6" fill="#777"/><rect x="6.86" y="0" width="0.8" height="1.6" fill="#777"/><rect x="10.50" y="0" width="0.8" height="1.6" fill="#777"/><rect x="14.13" y="0" width="0.8" height="1.6" fill="#777"/><rect x="17.76" y="0" width="0.9" height="2.8" fill="#cfcfcf"/><rect x="21.39" y="0" width="0.8" height="1.6" fill="#777"/><rect x="25.02" y="0" width="0.8" height="1.6" fill="#777"/><rect x="28.65" y="0" width="0.8" height="1.6" fill="#777"/><rect x="32.28" y="0" width="0.8" height="1.6" fill="#777"/><rect x="35.92" y="0" width="0.9" height="2.8" fill="#cfcfcf"/><rect x="39.55" y="0" width="0.8" height="1.6" fill="#777"/><rect x="43.18" y="0" width="0.8" height="1.6" fill="#777"/><rect x="46.81" y="0" width="0.8" height="1.6" fill="#777"/><rect x="50.44" y="0" width="0.8" height="1.6" fill="#777"/><rect x="54.07" y="0" width="0.9" height="2.8" fill="#cfcfcf"/><rect x="57.71" y="0" width="0.8" height="1.6" fill="#777"/><rect x="61.34" y="0" width="0.8" height="1.6" fill="#777"/><rect x="64.97" y="0" width="0.8" height="1.6" fill="#777"/><rect x="68.60" y="0" width="0.8" height="1.6" fill="#777"/><rect x="72.23" y="0" width="0.9" height="2.8" fill="#cfcfcf"/><rect x="75.87" y="0" width="0.8" height="1.6" fill="#777"/><rect x="79.50" y="0" width="0.8" height="1.6" fill="#777"/><rect x="83.13" y="0" width="0.8" height="1.6" fill="#777"/><rect x="86.76" y="0" width="0.8" height="1.6" fill="#777"/><rect x="90.39" y="0" width="0.9" height="2.8" fill="#cfcfcf"/><rect x="94.02" y="0" width="0.8" height="1.6" fill="#777"/><rect x="97.65" y="0" width="0.8" height="1.6" fill="#777"/><rect x="101.29" y="0" width="0.8" height="1.6" fill="#777"/><rect x="104.92" y="0" width="0.8" height="1.6" fill="#777"/><rect x="108.55" y="0" width="0.9" height="2.8" fill="#cfcfcf"/><rect x="112.18" y="0" width="0.8" height="1.6" fill="#777"/><rect x="115.81" y="0" width="0.8" height="1.6" fill="#777"/><rect x="119.44" y="0" width="0.8" height="1.6" fill="#777"/><rect x="123.08" y="0" width="0.8" height="1.6" fill="#777"/><rect x="126.71" y="0" width="0.9" height="2.8" fill="#cfcfcf"/><rect x="130.34" y="0" width="0.8" height="1.6" fill="#777"/><rect x="133.97" y="0" width="0.8" height="1.6" fill="#777"/><rect x="137.60" y="0" width="0.8" height="1.6" fill="#777"/><rect x="141.24" y="0" width="0.8" height="1.6" fill="#777"/><rect x="144.87" y="0" width="0.9" height="2.8" fill="#cfcfcf"/><rect x="148.50" y="0" width="0.8" height="1.6" fill="#777"/><rect x="152.13" y="0" width="0.8" height="1.6" fill="#777"/><rect x="155.76" y="0" width="0.8" height="1.6" fill="#777"/><rect x="159.39" y="0" width="0.8" height="1.6" fill="#777"/><rect x="163.02" y="0" width="0.9" height="2.8" fill="#cfcfcf"/><rect x="166.66" y="0" width="0.8" height="1.6" fill="#777"/><rect x="170.29" y="0" width="0.8" height="1.6" fill="#777"/><rect x="173.92" y="0" width="0.8" height="1.6" fill="#777"/><rect x="177.55" y="0" width="0.8" height="1.6" fill="#777"/><rect x="181.18" y="0" width="0.9" height="2.8" fill="#cfcfcf"/><rect x="184.81" y="0" width="0.8" height="1.6" fill="#777"/><rect x="188.45" y="0" width="0.8" height="1.6" fill="#777"/><rect x="192.08" y="0" width="0.8" height="1.6" fill="#777"/><rect x="195.71" y="0" width="0.8" height="1.6" fill="#777"/><rect x="199.34" y="0" width="0.9" height="2.8" fill="#cfcfcf"/><rect x="202.97" y="0" width="0.8" height="1.6" fill="#777"/><rect x="206.61" y="0" width="0.8" height="1.6" fill="#777"/><rect x="210.24" y="0" width="0.8" height="1.6" fill="#777"/><rect x="213.87" y="0" width="0.8" height="1.6" fill="#777"/><rect x="217.50" y="0" width="0.9" height="2.8" fill="#cfcfcf"/></svg>
<div class="t" style="left:242.1px;top:403.54px;font-size:4.8px;line-height:4.8px;color:#c8c8c8;-webkit-text-stroke:0.15px #c8c8c8;transform:scaleX(0.95);transform-origin:50% 0;width:10px;text-align:center;text-align:center;">-60</div>
<div class="t" style="left:260.2583333333333px;top:403.54px;font-size:4.8px;line-height:4.8px;color:#c8c8c8;-webkit-text-stroke:0.15px #c8c8c8;transform:scaleX(0.95);transform-origin:50% 0;width:10px;text-align:center;text-align:center;">-55</div>
<div class="t" style="left:278.4166666666667px;top:403.54px;font-size:4.8px;line-height:4.8px;color:#c8c8c8;-webkit-text-stroke:0.15px #c8c8c8;transform:scaleX(0.95);transform-origin:50% 0;width:10px;text-align:center;text-align:center;">-50</div>
<div class="t" style="left:296.575px;top:403.54px;font-size:4.8px;line-height:4.8px;color:#c8c8c8;-webkit-text-stroke:0.15px #c8c8c8;transform:scaleX(0.95);transform-origin:50% 0;width:10px;text-align:center;text-align:center;">-45</div>
<div class="t" style="left:314.73333333333335px;top:403.54px;font-size:4.8px;line-height:4.8px;color:#c8c8c8;-webkit-text-stroke:0.15px #c8c8c8;transform:scaleX(0.95);transform-origin:50% 0;width:10px;text-align:center;text-align:center;">-40</div>
<div class="t" style="left:332.89166666666665px;top:403.54px;font-size:4.8px;line-height:4.8px;color:#c8c8c8;-webkit-text-stroke:0.15px #c8c8c8;transform:scaleX(0.95);transform-origin:50% 0;width:10px;text-align:center;text-align:center;">-35</div>
<div class="t" style="left:351.05px;top:403.54px;font-size:4.8px;line-height:4.8px;color:#c8c8c8;-webkit-text-stroke:0.15px #c8c8c8;transform:scaleX(0.95);transform-origin:50% 0;width:10px;text-align:center;text-align:center;">-30</div>
<div class="t" style="left:369.2083333333333px;top:403.54px;font-size:4.8px;line-height:4.8px;color:#c8c8c8;-webkit-text-stroke:0.15px #c8c8c8;transform:scaleX(0.95);transform-origin:50% 0;width:10px;text-align:center;text-align:center;">-25</div>
<div class="t" style="left:387.3666666666667px;top:403.54px;font-size:4.8px;line-height:4.8px;color:#c8c8c8;-webkit-text-stroke:0.15px #c8c8c8;transform:scaleX(0.95);transform-origin:50% 0;width:10px;text-align:center;text-align:center;">-20</div>
<div class="t" style="left:405.525px;top:403.54px;font-size:4.8px;line-height:4.8px;color:#c8c8c8;-webkit-text-stroke:0.15px #c8c8c8;transform:scaleX(0.95);transform-origin:50% 0;width:10px;text-align:center;text-align:center;">-15</div>
<div class="t" style="left:423.68333333333334px;top:403.54px;font-size:4.8px;line-height:4.8px;color:#c8c8c8;-webkit-text-stroke:0.15px #c8c8c8;transform:scaleX(0.95);transform-origin:50% 0;width:10px;text-align:center;text-align:center;">-10</div>
<div class="t" style="left:441.8416666666667px;top:403.54px;font-size:4.8px;line-height:4.8px;color:#c8c8c8;-webkit-text-stroke:0.15px #c8c8c8;transform:scaleX(0.95);transform-origin:50% 0;width:10px;text-align:center;text-align:center;">-5</div>
<div class="t" style="left:460.0px;top:403.54px;font-size:4.8px;line-height:4.8px;color:#c8c8c8;-webkit-text-stroke:0.15px #c8c8c8;transform:scaleX(0.95);transform-origin:50% 0;width:10px;text-align:center;text-align:center;">0</div>
<div class="a" style="left:244px;top:415px;width:171px;height:3.2px;background:#4a8fd6;border-radius:1px;box-shadow:0 0 0 1px #0c2440"></div>
<div class="a" style="left:415px;top:413.8px;width:12px;height:5.2px;background:#dcdcdc;border-radius:1px"></div>
<div class="t" style="left:243.69130209389863px;top:429.67px;font-size:7px;line-height:7px;color:#e8e8e8;-webkit-text-stroke:0.14px #e8e8e8;transform:scaleX(0.881994017432518);transform-origin:0 0;">Mic/Aux</div>
<div class="t" style="left:446.5822705163104px;top:429.67px;font-size:7px;line-height:7px;color:#ececec;-webkit-text-stroke:0.20px #ececec;transform:scaleX(0.9077985248273978);transform-origin:0 0;">0.0 dB</div>
<div class="a" style="left:247.1px;top:437.9px;width:145.26666666666668px;height:3.9px;background:#46993a;"></div>
<div class="a" style="left:392.3666666666667px;top:437.9px;width:39.94833333333332px;height:3.9px;background:#ada645;"></div>
<div class="a" style="left:432.315px;top:437.9px;width:33.185px;height:3.9px;background:#a33a3a;"></div>
<div class="a" style="left:247.1px;top:439.7px;width:217.9px;height:0.4px;background:rgba(0,0,0,0.25);"></div>
<div class="a" style="left:247.1px;top:441.79999999999995px;width:145.26666666666668px;height:1.0px;background:#1e361e;"></div>
<svg class="a" style="left:247.1px;top:441.79999999999995px;" width="222" height="3" viewBox="0 0 222 3"><rect x="-0.40" y="0" width="0.9" height="2.8" fill="#cfcfcf"/><rect x="3.23" y="0" width="0.8" height="1.6" fill="#777"/><rect x="6.86" y="0" width="0.8" height="1.6" fill="#777"/><rect x="10.50" y="0" width="0.8" height="1.6" fill="#777"/><rect x="14.13" y="0" width="0.8" height="1.6" fill="#777"/><rect x="17.76" y="0" width="0.9" height="2.8" fill="#cfcfcf"/><rect x="21.39" y="0" width="0.8" height="1.6" fill="#777"/><rect x="25.02" y="0" width="0.8" height="1.6" fill="#777"/><rect x="28.65" y="0" width="0.8" height="1.6" fill="#777"/><rect x="32.28" y="0" width="0.8" height="1.6" fill="#777"/><rect x="35.92" y="0" width="0.9" height="2.8" fill="#cfcfcf"/><rect x="39.55" y="0" width="0.8" height="1.6" fill="#777"/><rect x="43.18" y="0" width="0.8" height="1.6" fill="#777"/><rect x="46.81" y="0" width="0.8" height="1.6" fill="#777"/><rect x="50.44" y="0" width="0.8" height="1.6" fill="#777"/><rect x="54.07" y="0" width="0.9" height="2.8" fill="#cfcfcf"/><rect x="57.71" y="0" width="0.8" height="1.6" fill="#777"/><rect x="61.34" y="0" width="0.8" height="1.6" fill="#777"/><rect x="64.97" y="0" width="0.8" height="1.6" fill="#777"/><rect x="68.60" y="0" width="0.8" height="1.6" fill="#777"/><rect x="72.23" y="0" width="0.9" height="2.8" fill="#cfcfcf"/><rect x="75.87" y="0" width="0.8" height="1.6" fill="#777"/><rect x="79.50" y="0" width="0.8" height="1.6" fill="#777"/><rect x="83.13" y="0" width="0.8" height="1.6" fill="#777"/><rect x="86.76" y="0" width="0.8" height="1.6" fill="#777"/><rect x="90.39" y="0" width="0.9" height="2.8" fill="#cfcfcf"/><rect x="94.02" y="0" width="0.8" height="1.6" fill="#777"/><rect x="97.65" y="0" width="0.8" height="1.6" fill="#777"/><rect x="101.29" y="0" width="0.8" height="1.6" fill="#777"/><rect x="104.92" y="0" width="0.8" height="1.6" fill="#777"/><rect x="108.55" y="0" width="0.9" height="2.8" fill="#cfcfcf"/><rect x="112.18" y="0" width="0.8" height="1.6" fill="#777"/><rect x="115.81" y="0" width="0.8" height="1.6" fill="#777"/><rect x="119.44" y="0" width="0.8" height="1.6" fill="#777"/><rect x="123.08" y="0" width="0.8" height="1.6" fill="#777"/><rect x="126.71" y="0" width="0.9" height="2.8" fill="#cfcfcf"/><rect x="130.34" y="0" width="0.8" height="1.6" fill="#777"/><rect x="133.97" y="0" width="0.8" height="1.6" fill="#777"/><rect x="137.60" y="0" width="0.8" height="1.6" fill="#777"/><rect x="141.24" y="0" width="0.8" height="1.6" fill="#777"/><rect x="144.87" y="0" width="0.9" height="2.8" fill="#cfcfcf"/><rect x="148.50" y="0" width="0.8" height="1.6" fill="#777"/><rect x="152.13" y="0" width="0.8" height="1.6" fill="#777"/><rect x="155.76" y="0" width="0.8" height="1.6" fill="#777"/><rect x="159.39" y="0" width="0.8" height="1.6" fill="#777"/><rect x="163.02" y="0" width="0.9" height="2.8" fill="#cfcfcf"/><rect x="166.66" y="0" width="0.8" height="1.6" fill="#777"/><rect x="170.29" y="0" width="0.8" height="1.6" fill="#777"/><rect x="173.92" y="0" width="0.8" height="1.6" fill="#777"/><rect x="177.55" y="0" width="0.8" height="1.6" fill="#777"/><rect x="181.18" y="0" width="0.9" height="2.8" fill="#cfcfcf"/><rect x="184.81" y="0" width="0.8" height="1.6" fill="#777"/><rect x="188.45" y="0" width="0.8" height="1.6" fill="#777"/><rect x="192.08" y="0" width="0.8" height="1.6" fill="#777"/><rect x="195.71" y="0" width="0.8" height="1.6" fill="#777"/><rect x="199.34" y="0" width="0.9" height="2.8" fill="#cfcfcf"/><rect x="202.97" y="0" width="0.8" height="1.6" fill="#777"/><rect x="206.61" y="0" width="0.8" height="1.6" fill="#777"/><rect x="210.24" y="0" width="0.8" height="1.6" fill="#777"/><rect x="213.87" y="0" width="0.8" height="1.6" fill="#777"/><rect x="217.50" y="0" width="0.9" height="2.8" fill="#cfcfcf"/></svg>
<div class="t" style="left:242.1px;top:445.14px;font-size:4.8px;line-height:4.8px;color:#c8c8c8;-webkit-text-stroke:0.15px #c8c8c8;transform:scaleX(0.95);transform-origin:50% 0;width:10px;text-align:center;text-align:center;">-60</div>
<div class="t" style="left:260.2583333333333px;top:445.14px;font-size:4.8px;line-height:4.8px;color:#c8c8c8;-webkit-text-stroke:0.15px #c8c8c8;transform:scaleX(0.95);transform-origin:50% 0;width:10px;text-align:center;text-align:center;">-55</div>
<div class="t" style="left:278.4166666666667px;top:445.14px;font-size:4.8px;line-height:4.8px;color:#c8c8c8;-webkit-text-stroke:0.15px #c8c8c8;transform:scaleX(0.95);transform-origin:50% 0;width:10px;text-align:center;text-align:center;">-50</div>
<div class="t" style="left:296.575px;top:445.14px;font-size:4.8px;line-height:4.8px;color:#c8c8c8;-webkit-text-stroke:0.15px #c8c8c8;transform:scaleX(0.95);transform-origin:50% 0;width:10px;text-align:center;text-align:center;">-45</div>
<div class="t" style="left:314.73333333333335px;top:445.14px;font-size:4.8px;line-height:4.8px;color:#c8c8c8;-webkit-text-stroke:0.15px #c8c8c8;transform:scaleX(0.95);transform-origin:50% 0;width:10px;text-align:center;text-align:center;">-40</div>
<div class="t" style="left:332.89166666666665px;top:445.14px;font-size:4.8px;line-height:4.8px;color:#c8c8c8;-webkit-text-stroke:0.15px #c8c8c8;transform:scaleX(0.95);transform-origin:50% 0;width:10px;text-align:center;text-align:center;">-35</div>
<div class="t" style="left:351.05px;top:445.14px;font-size:4.8px;line-height:4.8px;color:#c8c8c8;-webkit-text-stroke:0.15px #c8c8c8;transform:scaleX(0.95);transform-origin:50% 0;width:10px;text-align:center;text-align:center;">-30</div>
<div class="t" style="left:369.2083333333333px;top:445.14px;font-size:4.8px;line-height:4.8px;color:#c8c8c8;-webkit-text-stroke:0.15px #c8c8c8;transform:scaleX(0.95);transform-origin:50% 0;width:10px;text-align:center;text-align:center;">-25</div>
<div class="t" style="left:387.3666666666667px;top:445.14px;font-size:4.8px;line-height:4.8px;color:#c8c8c8;-webkit-text-stroke:0.15px #c8c8c8;transform:scaleX(0.95);transform-origin:50% 0;width:10px;text-align:center;text-align:center;">-20</div>
<div class="t" style="left:405.525px;top:445.14px;font-size:4.8px;line-height:4.8px;color:#c8c8c8;-webkit-text-stroke:0.15px #c8c8c8;transform:scaleX(0.95);transform-origin:50% 0;width:10px;text-align:center;text-align:center;">-15</div>
<div class="t" style="left:423.68333333333334px;top:445.14px;font-size:4.8px;line-height:4.8px;color:#c8c8c8;-webkit-text-stroke:0.15px #c8c8c8;transform:scaleX(0.95);transform-origin:50% 0;width:10px;text-align:center;text-align:center;">-10</div>
<div class="t" style="left:441.8416666666667px;top:445.14px;font-size:4.8px;line-height:4.8px;color:#c8c8c8;-webkit-text-stroke:0.15px #c8c8c8;transform:scaleX(0.95);transform-origin:50% 0;width:10px;text-align:center;text-align:center;">-5</div>
<div class="t" style="left:460.0px;top:445.14px;font-size:4.8px;line-height:4.8px;color:#c8c8c8;-webkit-text-stroke:0.15px #c8c8c8;transform:scaleX(0.95);transform-origin:50% 0;width:10px;text-align:center;text-align:center;">0</div>
<div class="a" style="left:244.3px;top:438.2px;width:1px;height:3.6px;background:#8fb088;"></div>
<div class="a" style="left:244px;top:456px;width:171px;height:3.2px;background:#4a8fd6;border-radius:1px;box-shadow:0 0 0 1px #0c2440"></div>
<div class="a" style="left:415px;top:454.5px;width:12px;height:5.2px;background:#dcdcdc;border-radius:1px"></div>
<svg class="a" style="left:431.4px;top:411.2px;" width="15" height="11" viewBox="0 0 15 11"><path d="M0.3 3.4 L2.8 3.4 L6.8 0.2 L6.8 10.8 L2.8 7.6 L0.3 7.6 Z" fill="#e4e4e4"/><path d="M8.8 3 Q10.5 5.5 8.8 8" stroke="#e4e4e4" stroke-width="1.3" fill="none"/><path d="M11.4 1 Q14.6 5.5 11.4 10" stroke="#e4e4e4" stroke-width="1.3" fill="none"/></svg>
<svg class="a" style="left:431.4px;top:451.8px;" width="15" height="11" viewBox="0 0 15 11"><path d="M0.3 3.4 L2.8 3.4 L6.8 0.2 L6.8 10.8 L2.8 7.6 L0.3 7.6 Z" fill="#e4e4e4"/><path d="M8.8 3 Q10.5 5.5 8.8 8" stroke="#e4e4e4" stroke-width="1.3" fill="none"/><path d="M11.4 1 Q14.6 5.5 11.4 10" stroke="#e4e4e4" stroke-width="1.3" fill="none"/></svg>
<svg class="a" style="left:452px;top:411px;" width="11.5" height="11.5" viewBox="0 0 11.5 11.5"><circle cx="10.23" cy="5.75" r="1.26" fill="#e6e6e6"/><circle cx="8.92" cy="8.92" r="1.26" fill="#e6e6e6"/><circle cx="5.75" cy="10.23" r="1.26" fill="#e6e6e6"/><circle cx="2.58" cy="8.92" r="1.26" fill="#e6e6e6"/><circle cx="1.26" cy="5.75" r="1.26" fill="#e6e6e6"/><circle cx="2.58" cy="2.58" r="1.26" fill="#e6e6e6"/><circle cx="5.75" cy="1.26" r="1.26" fill="#e6e6e6"/><circle cx="8.92" cy="2.58" r="1.26" fill="#e6e6e6"/><circle cx="5.75" cy="5.75" r="4.02" fill="#e6e6e6"/><circle cx="5.75" cy="5.75" r="1.72" fill="#1f1e1f"/></svg>
<svg class="a" style="left:452px;top:451.5px;" width="11.5" height="11.5" viewBox="0 0 11.5 11.5"><circle cx="10.23" cy="5.75" r="1.26" fill="#e6e6e6"/><circle cx="8.92" cy="8.92" r="1.26" fill="#e6e6e6"/><circle cx="5.75" cy="10.23" r="1.26" fill="#e6e6e6"/><circle cx="2.58" cy="8.92" r="1.26" fill="#e6e6e6"/><circle cx="1.26" cy="5.75" r="1.26" fill="#e6e6e6"/><circle cx="2.58" cy="2.58" r="1.26" fill="#e6e6e6"/><circle cx="5.75" cy="1.26" r="1.26" fill="#e6e6e6"/><circle cx="8.92" cy="2.58" r="1.26" fill="#e6e6e6"/><circle cx="5.75" cy="5.75" r="4.02" fill="#e6e6e6"/><circle cx="5.75" cy="5.75" r="1.72" fill="#1f1e1f"/></svg>
<div class="a" style="left:468.6px;top:390px;width:7.4px;height:87px;background:#4c4b4c;border-radius:3.5px"></div>
<div class="a" style="left:482.8px;top:390.8px;width:82.8px;height:12.9px;background:#4c4b4c;border-radius:1px"></div>
<div class="a" style="left:552.3px;top:391.5px;width:0.8px;height:11.2px;background:#3a393a;"></div>
<div class="t" style="left:488.3505752376602px;top:394.22px;font-size:8.6px;line-height:8.6px;color:#e6e6e6;-webkit-text-stroke:0.17px #e6e6e6;transform:scaleX(0.812615726371572);transform-origin:0 0;">Fade</div>
<svg class="a" style="left:557px;top:393px;" width="4" height="8" viewBox="0 0 4 8"><path d="M0 2.5 L2 0.5 L4 2.5 M0 5.5 L2 7.5 L4 5.5" stroke="#aaa" stroke-width="0.8" fill="none"/></svg>
<svg class="a" style="left:570px;top:391.7px;" width="11.5" height="11.5" viewBox="0 0 11.5 11.5"><circle cx="10.23" cy="5.75" r="1.26" fill="#e6e6e6"/><circle cx="8.92" cy="8.92" r="1.26" fill="#e6e6e6"/><circle cx="5.75" cy="10.23" r="1.26" fill="#e6e6e6"/><circle cx="2.58" cy="8.92" r="1.26" fill="#e6e6e6"/><circle cx="1.26" cy="5.75" r="1.26" fill="#e6e6e6"/><circle cx="2.58" cy="2.58" r="1.26" fill="#e6e6e6"/><circle cx="5.75" cy="1.26" r="1.26" fill="#e6e6e6"/><circle cx="8.92" cy="2.58" r="1.26" fill="#e6e6e6"/><circle cx="5.75" cy="5.75" r="4.02" fill="#e6e6e6"/><circle cx="5.75" cy="5.75" r="1.72" fill="#3a393a"/></svg>
<div class="t" style="left:481.83819299761166px;top:409.22px;font-size:8.6px;line-height:8.6px;color:#dedede;-webkit-text-stroke:0.17px #dedede;transform:scaleX(0.8414116334612387);transform-origin:0 0;">Duration</div>
<div class="a" style="left:512px;top:406px;width:60px;height:13.2px;background:#1f1e1f;"></div>
<div class="t" style="left:517.6582335534696px;top:408.82px;font-size:8.6px;line-height:8.6px;color:#e6e6e6;-webkit-text-stroke:0.17px #e6e6e6;transform:scaleX(0.7948056896055898);transform-origin:0 0;">300 ms</div>
<div class="a" style="left:572.5px;top:406px;width:10.5px;height:6.4px;background:#4c4b4c;"></div>
<div class="a" style="left:572.5px;top:412.8px;width:10.5px;height:6.4px;background:#4c4b4c;"></div>
<svg class="a" style="left:574.3px;top:407.5px;" width="7" height="4" viewBox="0 0 7 4"><path d="M0.5 3.5 L3.5 0.5 L6.5 3.5" stroke="#ddd" stroke-width="0.9" fill="none"/></svg>
<svg class="a" style="left:574.3px;top:414.5px;" width="7" height="4" viewBox="0 0 7 4"><path d="M0.5 0.5 L3.5 3.5 L6.5 0.5" stroke="#ddd" stroke-width="0.9" fill="none"/></svg>
<div class="a" style="left:1px;top:481px;width:696px;height:1px;background:#262626;"></div>
<div class="a" style="left:1px;top:482px;width:696px;height:15px;background:#3a393a;"></div>
<div class="a" style="left:1px;top:497px;width:696px;height:1px;background:#2a2a2a;"></div>
<svg class="a" style="left:434px;top:487px;" width="12" height="7" viewBox="0 0 12 7"><circle cx="6" cy="3.5" r="1.6" fill="#8a8a8a"/><path d="M3.5 1 Q2 3.5 3.5 6 M8.5 1 Q10 3.5 8.5 6 M1.5 0 Q-0.5 3.5 1.5 7 M10.5 0 Q12.5 3.5 10.5 7" stroke="#8a8a8a" stroke-width="0.8" fill="none"/></svg>
<svg class="a" style="left:505px;top:487px;" width="7" height="7" viewBox="0 0 7 7"><circle cx="3.2" cy="3.2" r="3.2" fill="#9a9a9a"/></svg>
<div class="t" style="left:449.6399148628492px;top:487.12px;font-size:8.6px;line-height:8.6px;color:#dcdcdc;-webkit-text-stroke:0.17px #dcdcdc;transform:scaleX(0.8374072956994849);transform-origin:0 0;">LIVE: 00:00:00</div>
<div class="t" style="left:517.9413994309921px;top:487.12px;font-size:8.6px;line-height:8.6px;color:#dcdcdc;-webkit-text-stroke:0.17px #dcdcdc;transform:scaleX(0.8339548116462974);transform-origin:0 0;">REC: 00:00:00</div>
<div class="t" style="left:581.431543208054px;top:487.12px;font-size:8.6px;line-height:8.6px;color:#dcdcdc;-webkit-text-stroke:0.17px #dcdcdc;transform:scaleX(0.856876260339332);transform-origin:0 0;">CPU: 1.6%, 30.00 fps</div>
</body></html>
